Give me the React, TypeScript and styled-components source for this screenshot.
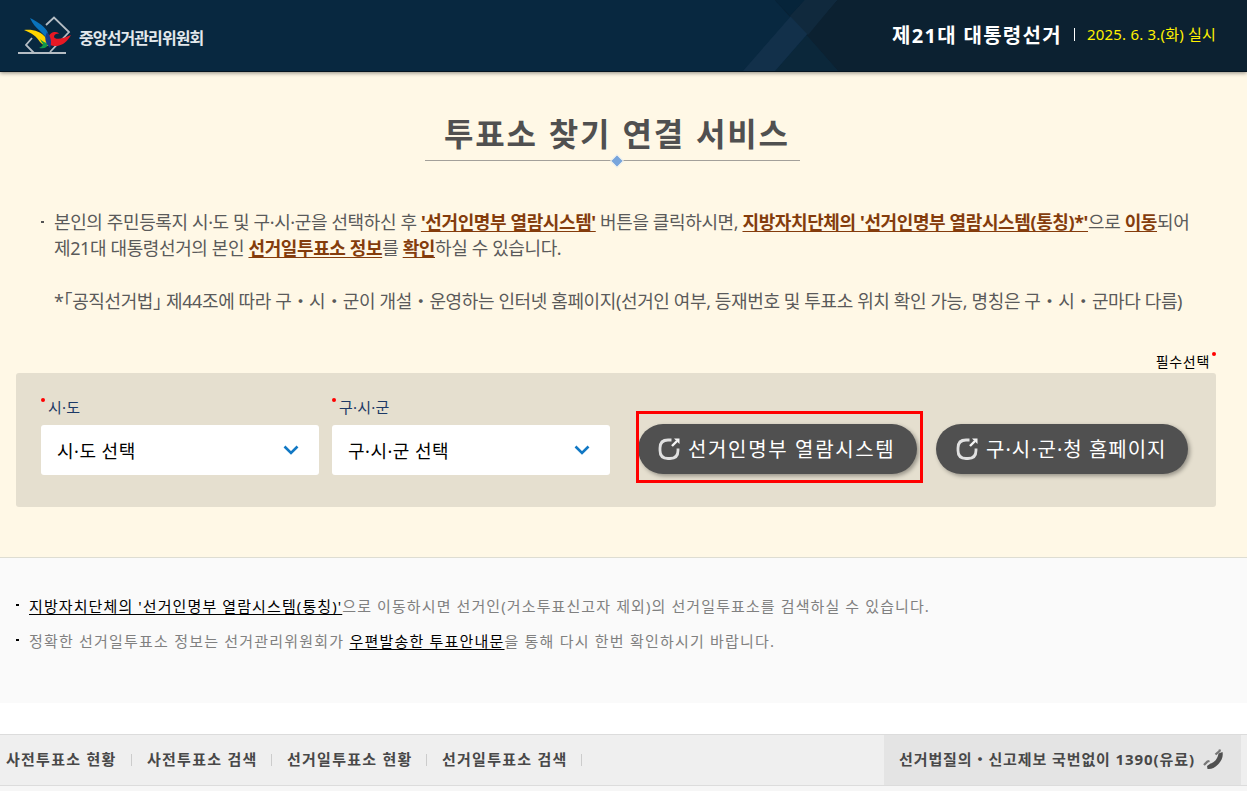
import styled, { createGlobalStyle } from "styled-components";

const GlobalStyle = createGlobalStyle`
  * {
    box-sizing: border-box;
  }
  body {
    margin: 0;
    background: #fff;
    font-family: "Noto Sans", "Noto Sans CJK KR", sans-serif;
    overflow: hidden;
  }
  ul, h1, p {
    margin: 0;
    padding: 0;
    list-style: none;
  }
`;

const Page = styled.div`
  width: 1247px;
  height: 791px;
  display: flex;
  flex-direction: column;
  overflow: hidden;
`;

const Header = styled.header`
  position: relative;
  z-index: 1;
  height: 72px;
  flex: none;
  display: flex;
  justify-content: space-between;
  padding: 0 31px 0 18px;
  background: #082840;
  border-bottom: 1px solid #061521;
  box-shadow: 0 1px 4px rgba(0, 0, 0, 0.45);
`;
const HeaderPattern = styled.svg`
  position: absolute;
  left: 720px;
  top: 0;
`;
const Logo = styled.div`
  display: flex;
  align-items: center;
  gap: 8px;
  height: 71px;
  padding-top: 5px;
  svg {
    margin-bottom: 4px;
  }
`;
const LogoText = styled.span`
  font-size: 16px;
  font-weight: 700;
  line-height: 20px;
  letter-spacing: -0.9px;
  color: #e3e8ec;
`;
const Election = styled.div`
  position: relative;
  display: flex;
  align-items: center;
  height: 69px;
  white-space: nowrap;
`;
const ElectionName = styled.strong`
  font-size: 20px;
  font-weight: 700;
  letter-spacing: 1.3px;
  color: #fff;
`;
const ElectionDate = styled.span`
  margin-left: 12px;
  padding-left: 13px;
  font-size: 15px;
  line-height: 15px;
  letter-spacing: 0.2px;
  color: #fff100;
  position: relative;
  &::before {
    content: "";
    position: absolute;
    left: 0;
    top: 1px;
    width: 1px;
    height: 13px;
    background: #fff;
  }
`;

const Main = styled.main`
  height: 486px;
  flex: none;
  padding: 38px 31px 0 16px;
  background: #fff8e6;
  border-bottom: 1px solid #deddd2;
`;
const Title = styled.h1`
  position: relative;
  width: 375px;
  height: 51px;
  margin-left: 409px;
  padding-left: 19px;
  border-bottom: 1px solid #a3a09a;
  font-size: 32px;
  font-weight: 700;
  line-height: 48px;
  letter-spacing: 1.8px;
  word-spacing: 1px;
  white-space: nowrap;
  color: #505050;
`;
const Diamond = styled.span`
  position: absolute;
  left: 188px;
  bottom: -5px;
  width: 8px;
  height: 8px;
  background: #78a5dc;
  outline: 1px solid #e6ecee;
  transform: rotate(45deg);
`;
const Guide = styled.ul`
  margin-top: 48px;
  height: 142px;
  font-size: 18px;
  line-height: 26px;
  letter-spacing: -0.385px;
  color: #5a5a5a;
  white-space: nowrap;
`;
const GuideItem = styled.li`
  position: relative;
  padding-left: 38px;
  &::before {
    content: "";
    position: absolute;
    left: 25px;
    top: 12px;
    width: 3px;
    height: 2px;
    background: #545454;
  }
`;
const GuideNote = styled.li`
  margin-top: 26px;
  padding-left: 38px;
`;
const Bracket = styled.span`
  font-family: "Noto Sans CJK KR", sans-serif;
  font-feature-settings: "halt";
`;
const Point = styled.strong`
  font-weight: 700;
  color: #843c0c;
  text-decoration: underline;
  text-decoration-thickness: 1px;
  text-underline-offset: 2px;
  text-decoration-skip-ink: none;
`;
const Required = styled.div`
  display: flex;
  justify-content: flex-end;
  gap: 2px;
  height: 22px;
  font-size: 14px;
  line-height: 21px;
  letter-spacing: 0.7px;
  color: #000;
`;
const Dot = styled.i`
  width: 4px;
  height: 4px;
  margin-top: 1px;
  border-radius: 50%;
  background: #f00;
`;
const SearchBox = styled.section`
  display: flex;
  height: 134px;
  padding: 24px 25px 0;
  background: #e5dfcf;
  border-radius: 3px;
`;
const Field = styled.div`
  width: 278px;
  margin-right: 13px;
`;
const FieldLabel = styled.label`
  display: flex;
  gap: 3px;
  height: 28px;
  font-size: 15px;
  line-height: 21px;
  letter-spacing: 0.2px;
  color: #1c3966;
`;
const Select = styled.button`
  display: flex;
  align-items: center;
  justify-content: space-between;
  width: 100%;
  height: 50px;
  padding: 0 20px 0 16px;
  border: 0;
  border-radius: 3px;
  background: #fff;
  font: 18px "Noto Sans", "Noto Sans CJK KR", sans-serif;
  letter-spacing: 0.5px;
  color: #000;
`;
const Actions = styled.div`
  display: flex;
  gap: 19px;
  margin-left: 15px;
  padding-top: 27px;
`;
const LinkButton = styled.button<{ $width: number; $spacing: number }>`
  position: relative;
  display: flex;
  align-items: center;
  gap: 8px;
  width: ${(props) => props.$width}px;
  height: 50px;
  padding: 0 0 0 20px;
  border: 0;
  border-radius: 25px;
  background: #505050;
  box-shadow: 2px 2px 4px rgba(0, 0, 0, 0.35);
  font: 20px "Noto Sans", "Noto Sans CJK KR", sans-serif;
  letter-spacing: ${(props) => props.$spacing}px;
  white-space: nowrap;
  color: #fff;
`;
const ButtonText = styled.span`
  padding-bottom: 2px;
`;
const Highlight = styled.span`
  position: absolute;
  left: -2px;
  top: -13px;
  width: 287px;
  height: 72px;
  border: 3px solid #f00;
`;

const Notice = styled.ul`
  height: 145px;
  flex: none;
  padding: 30px 16px 0;
  background: #fafafa;
`;
const NoticeItem = styled.li<{ $spacing: number }>`
  display: flex;
  align-items: center;
  height: 35px;
  font-size: 15px;
  letter-spacing: ${(props) => props.$spacing}px;
  white-space: nowrap;
  color: #808080;
  &::before {
    content: "";
    width: 3px;
    height: 2px;
    margin: -2px 10px 0 0;
    background: #000;
  }
  p {
    margin-top: -1px;
  }
  u {
    color: #000;
    text-decoration-thickness: 1px;
    text-underline-offset: 2px;
    text-decoration-skip-ink: none;
  }
`;

const Footer = styled.footer`
  display: flex;
  height: 52px;
  margin-top: 31px;
  flex: none;
  padding-right: 6px;
  background: #efefef;
  border-top: 1px solid #dcdcdc;
  border-bottom: 1px solid #dcdcdc;
  font-size: 15px;
  font-weight: 700;
  line-height: 48px;
  white-space: nowrap;
  color: #484848;
`;
const FooterNav = styled.nav`
  display: flex;
  flex: 1;
  padding-left: 6px;
`;
const FooterLink = styled.a<{ $width: number }>`
  display: flex;
  justify-content: space-between;
  width: ${(props) => props.$width}px;
  margin-right: 15px;
  letter-spacing: 1.25px;
  &::after {
    content: "";
    width: 1px;
    height: 12px;
    margin-top: 19px;
    background: #ccc;
  }
`;
const CallCenter = styled.div`
  display: flex;
  justify-content: space-between;
  width: 357px;
  padding: 0 17px 0 15px;
  background: #e4e4e4;
  letter-spacing: 0.9px;
  svg {
    margin-top: 14px;
  }
`;
const Bottom = styled.div`
  flex: 1;
  background: #f6f6f6;
`;

const LogoMark = () => (
  <svg width="53" height="40" viewBox="0 0 53 40">
    <path d="M28 9 36 1.500 51 16 32 36M14 22l-6 7 8 8" fill="none" stroke="#b5bdc4" strokeWidth="1.8" />
    <path d="M0 37h48" stroke="#b5bdc4" strokeWidth="2" />
    <path d="M6 14c8-1 17 1 22 8l3 8c-4 0-6-1-9-4-3-5-8-9-16-12z" fill="#ffd400" />
    <path d="M12 2c8 4 16 9 18 15 1 4 1 6 0 9C27 16 17 14 12 2z" fill="#0a73bd" />
    <path d="M22 23c3 3 5 3 8 5-1 4-4 5-9 4 2-1 4-2 4-4-1-1-2-3-3-5z" fill="#12994a" />
    <path d="M31 28c-2-6 0-11 5-12 2 0 4 0 5 2-3-1-5 1-5 3 1 3 9 2 17-2-4 7-8 10-14 11-3 0-6 0-8-2z" fill="#e71924" />
    <path d="M29 16c4 5 5 10 3 16-5-5-6-10-3-16z" fill="#183a86" />
  </svg>
);

const Chevron = () => (
  <svg width="16" height="11" viewBox="0 0 16 11">
    <path d="M1.5 1.5 8 8l6.5-6.5" fill="none" stroke="#1178c4" strokeWidth="2.6" />
  </svg>
);

const OpenIcon = () => (
  <svg width="22" height="22" viewBox="0 0 22 22">
    <path
      d="M13.500 2H10Q2 2 2 10v2.500Q2 20.500 10 20.500h2q8 0 8-8V10.500"
      fill="none"
      stroke="#e0e0e0"
      strokeWidth="2.8"
    />
    <path d="M16 0.500H21.500V6z" fill="#f5f5f5" />
    <path d="m14 8 5-5" stroke="#f5f5f5" strokeWidth="2.4" />
  </svg>
);

const PhoneIcon = () => (
  <svg width="21" height="21" viewBox="0 0 21 21">
    <path d="M15.500 4.500 19.500 3c1 5-1 9-4.500 12.500-3.500 3.500-7 5-10.500 4.500L4 17l3.500-2.500c4-1 7-4.500 8-10z" fill="#505050" />
    <path d="m12.500 5.500 4-3.500.5-1.500M1 16l3.500-3.500 2-.5" fill="none" stroke="#777" strokeWidth="2.3" />
  </svg>
);

const fields = [
  { label: "시·도", value: "시·도 선택" },
  { label: "구·시·군", value: "구·시·군 선택" },
];

const links = [
  { name: "사전투표소 현황", width: 126 },
  { name: "사전투표소 검색", width: 125 },
  { name: "선거일투표소 현황", width: 140 },
  { name: "선거일투표소 검색", width: 140 },
];

export default function App() {
  return (
    <Page>
      <GlobalStyle />
      <Header>
        <HeaderPattern width="527" height="71" viewBox="0 0 527 71">
          <path d="M55 0h472v71H118z" fill="#0c2131" />
          <path d="M55 0h30L70 16z" fill="#06243a" />
          <path d="M70 16 118 71H55L87 35z" fill="#0b273a" />
          <path d="M85 0h32L55 71H23z" fill="#12304a" />
          <path d="M85 0h32L88 35 70 16z" fill="#10293d" />
        </HeaderPattern>
        <Logo>
          <LogoMark />
          <LogoText>중앙선거관리위원회</LogoText>
        </Logo>
        <Election>
          <ElectionName>제21대 대통령선거</ElectionName>
          <ElectionDate>2025. 6. 3.(화) 실시</ElectionDate>
        </Election>
      </Header>
      <Main>
        <Title>
          투표소 찾기 연결 서비스
          <Diamond />
        </Title>
        <Guide>
          <GuideItem>
            본인의 주민등록지 시·도 및 구·시·군을 선택하신 후 <Point>'선거인명부 열람시스템'</Point> 버튼을 클릭하시면,{" "}
            <Point>지방자치단체의 '선거인명부 열람시스템(통칭)*'</Point>으로 <Point>이동</Point>되어
            <br />
            제21대 대통령선거의 본인 <Point>선거일투표소 정보</Point>를 <Point>확인</Point>하실 수 있습니다.
          </GuideItem>
          <GuideNote>
            *<Bracket>「</Bracket>공직선거법<Bracket>」</Bracket> 제44조에 따라 구・시・군이 개설・운영하는 인터넷
            홈페이지(선거인 여부, 등재번호 및 투표소 위치 확인 가능, 명칭은 구・시・군마다 다름)
          </GuideNote>
        </Guide>
        <Required>
          필수선택
          <Dot />
        </Required>
        <SearchBox>
          {fields.map((field) => (
            <Field key={field.label}>
              <FieldLabel>
                <Dot />
                {field.label}
              </FieldLabel>
              <Select>
                {field.value}
                <Chevron />
              </Select>
            </Field>
          ))}
          <Actions>
            <LinkButton $width={279} $spacing={1.65}>
              <OpenIcon />
              <ButtonText>선거인명부 열람시스템</ButtonText>
              <Highlight />
            </LinkButton>
            <LinkButton $width={252} $spacing={1}>
              <OpenIcon />
              <ButtonText>구·시·군·청 홈페이지</ButtonText>
            </LinkButton>
          </Actions>
        </SearchBox>
      </Main>
      <Notice>
        <NoticeItem $spacing={1.1}>
          <p>
            <u>지방자치단체의 '선거인명부 열람시스템(통칭)'</u>으로 이동하시면 선거인(거소투표신고자 제외)의 선거일투표소를 검색하실 수 있습니다.
          </p>
        </NoticeItem>
        <NoticeItem $spacing={1.2}>
          <p>
            정확한 선거일투표소 정보는 선거관리위원회가 <u>우편발송한 투표안내문</u>을 통해 다시 한번 확인하시기 바랍니다.
          </p>
        </NoticeItem>
      </Notice>
      <Footer>
        <FooterNav>
          {links.map((link) => (
            <FooterLink key={link.name} $width={link.width}>
              {link.name}
            </FooterLink>
          ))}
        </FooterNav>
        <CallCenter>
          선거법질의・신고제보 국번없이 1390(유료)
          <PhoneIcon />
        </CallCenter>
      </Footer>
      <Bottom />
    </Page>
  );
}
